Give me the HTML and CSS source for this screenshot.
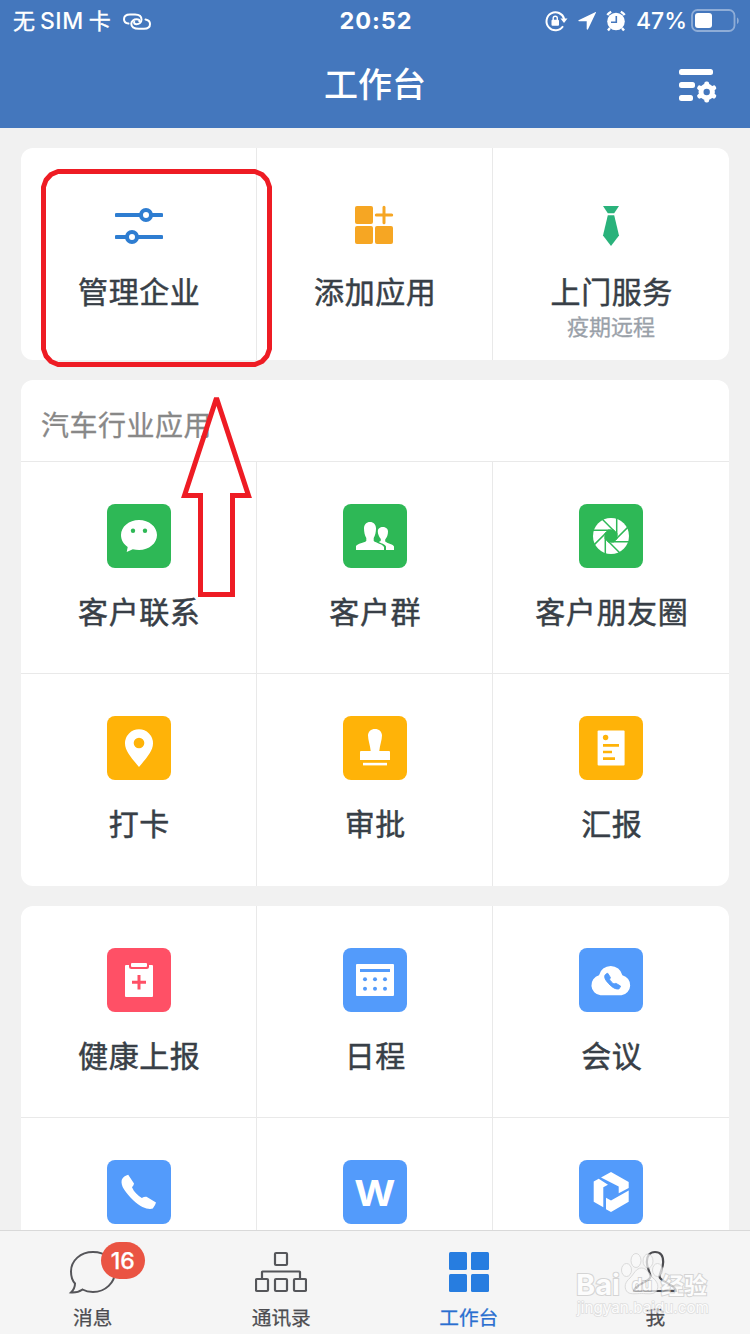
FILE: index.html
```html
<!DOCTYPE html>
<html lang="zh-CN">
<head>
<meta charset="utf-8">
<title>工作台</title>
<link rel="stylesheet" href="styles.css">
</head>
<body>
<div class="screen">
  <header class="header">
    <div class="status">
      <div class="status-left">
        <span class="carrier"><span>无</span><span class="sim">SIM</span><span>卡</span></span>
        <svg class="link-icon" width="30" height="20" viewBox="0 0 30 20" fill="none" stroke="#fff" stroke-width="2" stroke-linecap="round">
          <path d="M6.500 12.600C3.500 12.200 2 10.500 2 8.200C2 5.300 4.500 3.500 8 3.500H13C17 3.500 19.500 5.500 19.500 8.500C19.500 11.500 17 13.200 14.500 13.200C12.500 13.200 11.700 12 12.200 11"/>
          <path d="M23.500 8.500C26.500 9 28 10.700 28 13C28 16 25.500 17.800 22 17.800H17C12 17.800 9.300 15.800 9.300 12.800C9.300 10 12 8.200 14.500 8.200C17 8.200 17.800 9.200 17.300 10.300"/>
        </svg>
      </div>
      <div class="time">20:52</div>
      <div class="status-right">
        <svg width="24" height="22" viewBox="0 0 24 22" fill="none">
          <path d="M19 16.300A9 9 0 1 1 20.200 9" stroke="#fff" stroke-width="2"/>
          <path d="M16.500 8.500H23.500L20 13Z" fill="#fff"/>
          <rect x="7.500" y="9.800" width="7.500" height="6" rx="1" fill="#fff"/>
          <path d="M9.200 10V8.300A2 2 0 0 1 13.300 8.300V10" stroke="#fff" stroke-width="1.400"/>
        </svg>
        <svg class="locate" width="20" height="20" viewBox="0 0 20 20"><path d="M18.700 1L1.500 9.200Q1 10 2 10.200H9.700V18Q10.200 19.200 11 18.200L19 1.500Q19.200 .800 18.700 1Z" fill="#fff"/></svg>
        <svg class="alarm" width="20" height="22" viewBox="0 0 20 22" fill="none">
          <circle cx="10" cy="11.500" r="8.800" fill="#fff"/>
          <path d="M1.300 5A12 12 0 0 1 5.200 1.800M14.800 1.800A12 12 0 0 1 18.700 5M4 18L2 20.600M16 18L18 20.600" stroke="#fff" stroke-width="2.400"/>
          <path d="M10.300 6V12.300H5" stroke="#4477bd" stroke-width="1.600"/>
        </svg>
        <span class="percent">47%</span>
        <svg width="49" height="24" viewBox="0 0 49 24" fill="none">
          <rect x="2" y="1" width="42.500" height="21" rx="5.500" stroke="#8fadd7" stroke-width="1.800"/>
          <path d="M47 8.500C49.300 9.500 49.300 14 47 15Z" fill="#8fadd7"/>
          <rect x="5" y="4" width="17" height="15" rx="3" fill="#fff"/>
        </svg>
      </div>
    </div>
    <div class="titlebar">
      <span></span>
      <h1>工作台</h1>
      <svg class="settings" width="40" height="36" viewBox="0 0 40 36" fill="#fff">
        <rect x="1" y="2" width="34" height="6" rx="2.500"/>
        <rect x="1" y="15" width="16" height="6" rx="2.500"/>
        <rect x="1" y="28" width="14" height="6" rx="2.500"/>
        <g transform="translate(28.700 25)">
          <circle r="5.700" fill="none" stroke="#fff" stroke-width="5"/>
          <rect x="-2.400" y="-10.500" width="4.800" height="21" rx="2"/><rect x="-2.400" y="-10.500" width="4.800" height="21" rx="2" transform="rotate(60)"/><rect x="-2.400" y="-10.500" width="4.800" height="21" rx="2" transform="rotate(120)"/>
          <circle r="3.200" fill="#4477bd"/>
        </g>
      </svg>
    </div>
  </header>

  <main class="content">
    <section class="card grid">
      <div class="cell tool">
        <svg width="48" height="44" viewBox="0 0 48 44" fill="none" stroke="#2e7dd1" stroke-width="4">
          <path d="M1.500 11H25M37 11H46.500M1.500 33H11M23 33H46.500" stroke-linecap="round"/>
          <circle cx="31" cy="11" r="5"/><circle cx="17" cy="33" r="5"/>
        </svg>
        <span class="label">管理企业</span>
      </div>
      <div class="cell tool">
        <svg width="40" height="44" viewBox="0 0 40 44" fill="#f6a623">
          <rect x="0" y="2" width="18" height="18" rx="2"/><rect x="0" y="22" width="18" height="18" rx="2"/><rect x="20" y="22" width="18" height="18" rx="2"/>
          <path d="M29 3.300V18.700M21.300 11H36.700" stroke="#f6a623" stroke-width="3" stroke-linecap="round"/>
        </svg>
        <span class="label">添加应用</span>
      </div>
      <div class="cell tool">
        <svg width="20" height="44" viewBox="0 0 20 44" fill="#2ab27b"><path d="M2 2H18L13.200 9.300H6.800Z"/><path d="M6.800 11.300H13.200L18 31.500L10 42L2 31.500Z"/></svg>
        <span class="label">上门服务</span>
        <span class="sub">疫期远程</span>
      </div>
    </section>

    <section class="card">
      <h2 class="card-title">汽车行业应用</h2>
      <div class="grid">
        <div class="cell">
          <svg class="tile green" viewBox="0 0 64 64"><path d="M32 16C42 16 50 22.700 50 31S42 46 32 46C30 46 27.800 45.800 25.800 45.300L19.700 48L20.700 43C16.500 40 14 36 14 31C14 22.700 22 16 32 16Z" fill="#fff"/><circle cx="26" cy="26.800" r="2.200" fill="#2eb856"/><circle cx="38" cy="26.800" r="2.200" fill="#2eb856"/></svg>
          <span class="label">客户联系</span>
        </div>
        <div class="cell">
          <svg class="tile green" viewBox="0 0 64 64" fill="#fff"><path d="M13 46V42C14.500 39.500 21 38.800 23.300 37V34C21.800 31.500 21 28 21 24.500C21 20.500 23.500 18 27 18S33 20.500 33 24.500C33 28 32.200 31.500 30.700 34V37C33 39 39.500 40 41 43V46Z"/><path d="M43 46V42.500C42.200 40.200 38.200 39.300 35.800 38C37.300 37.500 37.800 37 37.800 36V35C36 32.500 34.800 30 34.800 27.500C34.800 24.700 37 23 39.800 23S45 24.700 45 27.500C45 30.500 44 33.500 42.200 35.500V37.500C44 39.300 49.500 39.800 51 42.500V46Z"/></svg>
          <span class="label">客户群</span>
        </div>
        <div class="cell">
          <svg class="tile green" viewBox="0 0 64 64"><circle cx="32" cy="32" r="18" fill="#fff"/><g transform="translate(32 32)" stroke="#2eb856" stroke-width="1.500"><path d="M5.700 2.400L2.400 5.700H-2.400L-5.700 2.400V-2.400L-2.400 -5.700H2.400L5.700 -2.400Z" fill="#2eb856"/><path d="M5.700 -19V0M19 5.700H0M-5.700 19V0M-19 -5.700H0"/><path transform="rotate(45)" d="M5.700 -19V0M19 5.700H0M-5.700 19V0M-19 -5.700H0"/></g></svg>
          <span class="label">客户朋友圈</span>
        </div>
        <div class="cell">
          <svg class="tile amber" viewBox="0 0 64 64"><path d="M32 13.300A14 14 0 0 1 46 27.500C46 35 39 42.500 32 51C25 42.500 18 35 18 27.500A14 14 0 0 1 32 13.300Z" fill="#fff"/><circle cx="32" cy="27" r="5.300" fill="#ffb308"/></svg>
          <span class="label">打卡</span>
        </div>
        <div class="cell">
          <svg class="tile amber" viewBox="0 0 64 64" fill="#fff"><path d="M32 13C36 13 39 15.700 39 19.500C39 24 36.800 29 36.300 35H46Q47 35 47 36V44H17V36Q17 35 18 35H27.700C27.200 29 25 24 25 19.500C25 15.700 28 13 32 13Z"/><rect x="20" y="46.800" width="24" height="2.600"/></svg>
          <span class="label">审批</span>
        </div>
        <div class="cell">
          <svg class="tile amber" viewBox="0 0 64 64"><rect x="18.600" y="14.500" width="27" height="35" rx="1" fill="#fff"/><circle cx="26.600" cy="21.500" r="2.700" fill="#ffb308"/><path d="M24 29.300H40M24 36H33M24 42.600H36" stroke="#ffb308" stroke-width="2.700"/></svg>
          <span class="label">汇报</span>
        </div>
      </div>
    </section>

    <section class="card grid last">
      <div class="cell">
        <svg class="tile red" viewBox="0 0 64 64"><rect x="18" y="17" width="28" height="32" rx="1" fill="#fff"/><path d="M22 15V18.500Q22 21 24.500 21H39.500Q42 21 42 18.500V15Z" fill="#ff5066"/><rect x="24" y="15" width="16" height="4" rx="1" fill="#fff"/><path d="M32 27V41.500M25 34.300H39" stroke="#ff5066" stroke-width="3"/></svg>
        <span class="label">健康上报</span>
      </div>
      <div class="cell">
        <svg class="tile blue" viewBox="0 0 64 64" fill="#539bfb"><rect x="13" y="16" width="38" height="32" rx="1" fill="#fff"/><rect x="17" y="21" width="30" height="3"/><circle cx="22" cy="31.300" r="2"/><circle cx="32" cy="31.300" r="2"/><circle cx="42" cy="31.300" r="2"/><circle cx="22" cy="40.700" r="2"/><circle cx="32" cy="40.700" r="2"/><circle cx="42" cy="40.700" r="2"/></svg>
        <span class="label">日程</span>
      </div>
      <div class="cell">
        <svg class="tile blue" viewBox="0 0 64 64"><path d="M21.500 47.300A10.200 10.200 0 0 1 20 27.300A12 12 0 0 1 43.400 27.300A10.200 10.200 0 0 1 42.500 47.300Z" fill="#fff"/><path transform="translate(19 18.500) scale(.46)" d="M21.200 14.700L27 24Q27 25 25 27.500C27 32 31 36 34.800 38Q37.500 36.400 39.500 36.800L49 42.500Q48.500 45 45.800 48.500C42 50 34 48 26.500 40.500C18 32 13.500 26 14.700 20C15.800 17 18.500 15.500 21.200 14.700Z" fill="#539bfb" stroke="#539bfb" stroke-width="2" stroke-linejoin="round"/></svg>
        <span class="label">会议</span>
      </div>
      <div class="cell">
        <svg class="tile blue" viewBox="0 0 64 64" fill="#fff"><path d="M21.200 14.700L27 23.500Q27 25 25 27.300C27 32 31 36 34.800 38Q37.500 36.400 39.500 36.800L49 42.500Q48.500 45 45.800 48.500C42 50 34 48 26.500 40.500C18 32 13.500 26 14.700 20C15.800 17 18.500 15.500 21.200 14.700Z"/></svg>
      </div>
      <div class="cell">
        <div class="tile blue letter"><span>W</span></div>
      </div>
      <div class="cell">
        <svg class="tile blue" viewBox="0 0 64 64" fill="#fff"><path d="M32 12L49.700 22V28L39.700 33.300V26.500L22 17.500Z"/><path d="M19.700 18.700L14.700 21.500V41.700L24.300 47.300V27.300L29 24.700Z"/><path d="M49.700 30.500V41.700L32 52L27 49.300V37.800L32 40.500Z"/></svg>
      </div>
    </section>
  </main>

  <nav class="tabs">
    <div class="tab">
      <div class="tab-icon">
        <svg width="50" height="46" viewBox="0 0 50 46" fill="none" stroke="#555559" stroke-width="2"><path d="M25 3C37.500 3 47 11.500 47 22.500S37.500 43 25 43C21 43 17.500 42.200 14.500 40.500C11 43 7 43.800 3 43.500C5.500 41 7 38 7 34.500C4 31.300 3 27 3 22.500C3 11.500 12.500 3 25 3Z" /></svg>
        <span class="badge">16</span>
      </div>
      <span>消息</span>
    </div>
    <div class="tab">
      <svg width="52" height="46" viewBox="0 0 52 46" fill="none" stroke="#55565a" stroke-width="2.200"><rect x="20" y="4" width="12" height="12" rx="1"/><rect x="1" y="30" width="12" height="12" rx="1"/><rect x="20" y="30" width="12" height="12" rx="1"/><rect x="39" y="30" width="12" height="12" rx="1"/><path d="M7 30V23Q7 22.500 7.500 22.500H44.500Q45 22.500 45 23V30"/></svg>
      <span>通讯录</span>
    </div>
    <div class="tab active">
      <svg width="40" height="46" viewBox="0 0 40 46" fill="#277de0"><rect x="0" y="3" width="18" height="18" rx="1.500"/><rect x="22" y="3" width="18" height="18" rx="1.500"/><rect x="0" y="25" width="18" height="18" rx="1.500"/><rect x="22" y="25" width="18" height="18" rx="1.500"/></svg>
      <span>工作台</span>
    </div>
    <div class="tab me">
      <svg width="46" height="46" viewBox="0 0 46 46" fill="none" stroke="#4c4c50" stroke-width="2.200"><path d="M18.500 27.500C18.500 24 14.800 19.500 14.800 13C14.800 6.500 18 3 23 3S31.200 6.500 31.200 13C31.200 19.500 27.500 24 27.500 27.500C27.500 33 43.500 35 44 42H2C2.500 35 18.500 33 18.500 27.500Z"/></svg>
      <span>我</span>
    </div>
  </nav>

  <svg class="watermark" width="150" height="74" viewBox="0 0 150 74">
    <g fill="#fafafa" stroke="#d0d0d0" stroke-width="1">
      <ellipse cx="56.500" cy="20" rx="5" ry="6.500"/><ellipse cx="66" cy="10.500" rx="5" ry="7"/><ellipse cx="78" cy="11" rx="5" ry="7"/><ellipse cx="87.500" cy="20" rx="5" ry="6.500"/>
      <path d="M71.500 18C77 18 79 24 83 28C88 32 89 37 86.500 41C84 45 77 43.500 71.500 43.500S59 45 56.500 41C54 37 55 32 60 28C64 24 66 18 71.500 18Z"/>
    </g>
    <g class="wm-text">
      <text x="6" y="45" font-size="29" font-weight="700" textLength="44" lengthAdjust="spacingAndGlyphs">Bai</text>
      <text x="62" y="41" font-size="18" font-weight="700" textLength="20" lengthAdjust="spacingAndGlyphs">du</text>
      <text x="91" y="44" font-size="23" font-weight="700" textLength="46">经验</text>
      <text class="wm-url" x="7" y="63" font-size="15" textLength="132" lengthAdjust="spacingAndGlyphs">jingyan.baidu.com</text>
    </g>
  </svg>

  <svg class="markup" width="750" height="1334" viewBox="0 0 750 1334" fill="none" stroke="#ee1c24" stroke-width="5">
    <path d="M58 171.500H255L262 174.500L267 180L269.500 187V349L267 356L262 361.500L255 364.500H58L51 361.500L46 356L43.500 349V187L46 180L51 174.500Z" stroke-linejoin="round"/>
    <path d="M216.500 398L184.500 495.500H200.500V594.500H232.500V495.500H248.500Z" stroke-linejoin="miter" stroke-miterlimit="2"/>
  </svg>
</div>
</body>
</html>
```
FILE: styles.css
```css
* { box-sizing: border-box; }

body {
  margin: 0;
  background: #f1f1f1;
  color: #383f47;
  font-family: Inter, "Noto Sans CJK SC", sans-serif;
}

.screen {
  position: relative;
  display: flex;
  flex-direction: column;
  width: 750px;
  height: 1334px;
  overflow: hidden;
}

svg { display: block; flex: none; }

.header {
  flex: none;
  height: 128px;
  background: #4477bd;
  color: #fff;
}

.status {
  display: grid;
  grid-template-columns: 1fr auto 1fr;
  align-items: center;
  height: 41px;
  padding: 0 11px 0 13px;
}

.status-left, .status-right, .carrier { display: flex; align-items: center; }
.status-left { gap: 11px; }
.carrier { gap: 5px; font-size: 22px; line-height: 40px; font-weight: 400; -webkit-text-stroke: .4px; }
.sim { font-size: 23px; letter-spacing: .5px; font-weight: 500; -webkit-text-stroke: 0; }
.time { font-size: 23.500px; font-weight: 700; letter-spacing: .9px; }
.status-right { justify-content: flex-end; }
.locate { margin-left: 9px; }
.alarm { margin-left: 9px; }
.percent { margin: 0 3px 0 10px; font-size: 23px; font-weight: 500; }

.titlebar {
  display: grid;
  grid-template-columns: 1fr auto 1fr;
  align-items: center;
  height: 87px;
  padding: 0 32px;
}

h1 { margin: 0; font-size: 34px; line-height: 87px; font-weight: 500; }
.settings { justify-self: end; }

.content {
  flex: 1;
  min-height: 0;
  overflow: hidden;
  display: flex;
  flex-direction: column;
  gap: 20px;
  padding: 20px 21px 0;
}

.card {
  flex: none;
  background: #fff;
  border-radius: 12px;
  overflow: hidden;
}

.grid { display: grid; grid-template-columns: repeat(3, 236px); grid-auto-rows: 212px; }

.card-title {
  margin: 0;
  height: 82px;
  padding-left: 20px;
  border-bottom: 1px solid #e9e9e9;
  color: #888;
  font-size: 28px;
  line-height: 92px;
  font-weight: 400;
  letter-spacing: .5px;
  -webkit-text-stroke: .3px;
}

.cell {
  display: flex;
  flex-direction: column;
  align-items: center;
  padding-top: 42px;
  border-right: 1px solid #e9e9e9;
  border-bottom: 1px solid #e9e9e9;
}

.cell:nth-child(3n) { border-right: 0; }
.cell:nth-last-child(-n+3) { border-bottom: 0; }

.tool { padding-top: 56px; }

.tile { width: 64px; height: 64px; border-radius: 8px; }
.green { background: #2eb856; }
.amber { background: #ffb308; }
.red { background: #ff5066; }
.blue { background: #539bfb; }

.letter {
  color: #fff;
  font-size: 36px;
  font-weight: 700;
  line-height: 66px;
  text-align: center;
}

.letter span { display: inline-block; transform: scaleX(1.1); }

.label {
  margin-top: 22px;
  padding-left: 1.5px;
  font-size: 30px;
  line-height: 44px;
  letter-spacing: .6px;
  font-weight: 400;
  -webkit-text-stroke: .5px;
}

.sub { font-size: 22px; line-height: 26px; color: #9aa1a9; -webkit-text-stroke: .3px; }

.tabs {
  flex: none;
  display: grid;
  grid-template-columns: repeat(4, 1fr);
  height: 104px;
  background: #f5f5f5;
  border-top: 1px solid #d9d9d9;
  font-size: 19.700px;
  line-height: 30px;
  color: #4c4c50;
  -webkit-text-stroke: .25px;
}

.tab { display: flex; flex-direction: column; align-items: center; padding-top: 18px; gap: 8px; }
.tab:first-child, .me { padding-right: 2px; }
.active { color: #2a6fd0; }
.tab-icon { position: relative; }

.badge {
  position: absolute;
  left: 33px;
  top: -7px;
  width: 44px;
  height: 37px;
  border-radius: 19px;
  background: #ea5443;
  color: #fff;
  font-size: 23px;
  font-weight: 500;
  line-height: 38px;
  text-align: center;
}

.watermark { position: absolute; left: 570px; top: 1250px; opacity: .72; }
.wm-text { fill: #fff; stroke: #c8c8c8; stroke-width: 2px; paint-order: stroke; }
.wm-url { stroke: #d6d6d6; stroke-width: 1.500px; }
.markup { position: absolute; left: 0; top: 0; }
```
